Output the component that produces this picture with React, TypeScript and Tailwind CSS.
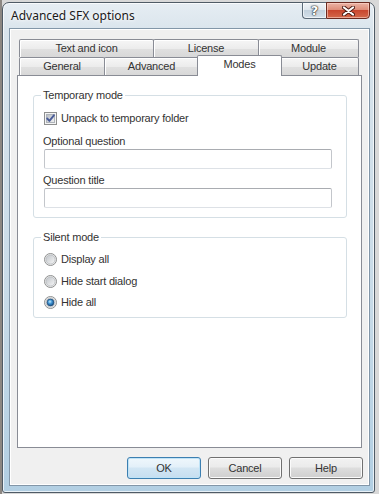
import React from "react";

const tabCls =
  "h-[18px] flex items-center justify-center border border-b-0 border-[#898c95] rounded-t-[2px] bg-[linear-gradient(#f6f6f6,#ececec_50%,#e0e0e0_52%,#d8d8d8)] shadow-[inset_1px_1px_0_#ffffff]";

function Checkbox() {
  return (
    <svg width="13" height="13" viewBox="0 0 13 13" className="shrink-0">
      <defs>
        <linearGradient id="cbg" x1="0" y1="0" x2="1" y2="1">
          <stop offset="0" stopColor="#b5bac1" />
          <stop offset="1" stopColor="#f4f4f4" />
        </linearGradient>
      </defs>
      <rect x="0.5" y="0.5" width="12" height="12" fill="#f4f4f4" stroke="#8e8f8f" />
      <rect x="2.5" y="2.5" width="8" height="8" fill="url(#cbg)" stroke="#aeb3b9" />
      <path
        d="M3.2 6.5 L5.4 8.9 L9.9 3.3"
        fill="none"
        stroke="#4a5c98"
        strokeWidth="1.9"
        strokeLinecap="round"
        strokeLinejoin="round"
      />
    </svg>
  );
}

function Radio({ checked, id }: { checked?: boolean; id: string }) {
  return (
    <svg width="13" height="13" viewBox="0 0 13 13" className="shrink-0">
      <defs>
        <linearGradient id={`rg${id}`} x1="0" y1="0" x2="1" y2="1">
          <stop offset="0" stopColor="#bfc3c8" />
          <stop offset="1" stopColor="#f8f8f8" />
        </linearGradient>
        <radialGradient id={`rd${id}`} cx="0.42" cy="0.38" r="0.65">
          <stop offset="0" stopColor="#c4ecff" />
          <stop offset="0.45" stopColor="#3f93d2" />
          <stop offset="1" stopColor="#154a7e" />
        </radialGradient>
      </defs>
      <circle cx="6.5" cy="6.5" r="6" fill="#f3f3f3" stroke="#8e8f8f" />
      <circle cx="6.5" cy="6.5" r="4.6" fill={`url(#rg${id})`} stroke="#b4b7bb" strokeWidth="0.8" />
      {checked && <circle cx="6.5" cy="6.5" r="3.4" fill={`url(#rd${id})`} stroke="#1b4a78" strokeWidth="0.7" />}
    </svg>
  );
}

function TextBox() {
  return (
    <div className="ml-[10px] w-[288px] h-[20px] bg-white rounded-[2px] border border-[#c3c6cb] border-t-[#a9acb1] border-b-[#dde1e6]" />
  );
}

function Button({ children, def }: { children: React.ReactNode; def?: boolean }) {
  return (
    <div
      className={
        def
          ? "w-[74px] h-[22px] flex items-center justify-center rounded-[3px] border border-[#3c7fb1] bg-[linear-gradient(#eff7fc,#e3f0f9_45%,#d2e6f4_50%,#c6def0)] shadow-[inset_0_0_0_1px_#bfe3f7]"
          : "w-[74px] h-[22px] flex items-center justify-center rounded-[3px] border border-[#707070] bg-[linear-gradient(#f2f2f2,#ebebeb_45%,#dddddd_50%,#cfcfcf)] shadow-[inset_0_0_0_1px_#fbfbfb]"
      }
    >
      {children}
    </div>
  );
}

export default function App() {
  return (
    <div className="w-[379px] h-[494px] overflow-hidden bg-[linear-gradient(90deg,#8c8782_0px,#8c8782_2px,#d8d8d8_2px)] pt-[2px] pl-[2px] font-['Liberation_Sans',Arial,sans-serif] text-[11px] tracking-[-0.2px] text-[#333333]">
      <div className="w-[373px] h-[491px] flex flex-col border border-[#4f5b66] rounded-t-[7px] rounded-b-[3px] bg-[linear-gradient(180deg,#e6edf3,#d9e4ec_6%,#c8dbe8_60%,#b2cfe3)] shadow-[inset_0_0_0_1px_rgba(255,255,255,0.7)]">
        {/* Title bar */}
        <div className="h-[25px] shrink-0 flex items-start pl-[8px] pr-[4px]">
          <div className="pt-[5px] text-[12px] leading-[16px] tracking-normal font-['Noto_Sans',sans-serif] text-[#1a1a1a] [text-shadow:0_0_6px_#fff,0_0_3px_#fff]">
            Advanced SFX options
          </div>
          <div className="ml-auto flex -mt-px h-[17px]">
            <div className="w-[24px] h-full flex items-center justify-center border border-r-0 border-[#5b6a78] rounded-bl-[4px] bg-[linear-gradient(#f1f4f7,#dfe7ee_45%,#c3d1dd_50%,#d4e0ea)] shadow-[inset_0_0_0_1px_rgba(255,255,255,0.6)]">
              <span className="text-[13px] leading-[13px] font-bold tracking-normal font-['DejaVu_Sans',sans-serif] text-white [text-shadow:0_0_1px_#222,0_0_1px_#222,0_0_2px_#333]">
                ?
              </span>
            </div>
            <div className="w-[44px] h-full flex items-center justify-center border border-[#6b2a20] rounded-br-[4px] bg-[linear-gradient(#ebb3a5,#de8d79_45%,#c9462e_50%,#d4694b)] shadow-[inset_0_0_0_1px_rgba(255,220,210,0.55)]">
              <svg width="13" height="10" viewBox="0 0 13 10">
                <path d="M2 1.5 L11 8.5 M11 1.5 L2 8.5" stroke="#4a1a12" strokeWidth="4" strokeLinecap="round" />
                <path d="M2 1.5 L11 8.5 M11 1.5 L2 8.5" stroke="#ffffff" strokeWidth="2.2" strokeLinecap="round" />
              </svg>
            </div>
          </div>
        </div>

        {/* Client area */}
        <div className="ml-[6px] mr-[4px] h-[458px] shrink-0 flex flex-col border border-[#8296a8] bg-[#f0f0f0] shadow-[inset_0_0_0_1px_#ffffff] pt-[10px] pb-[6px] px-[7px]">
          {/* Tab rows */}
          <div className="flex h-[18px] pl-[2px]">
            <div className={`${tabCls} w-[135px]`}>Text and icon</div>
            <div className={`${tabCls} w-[106px] -ml-px`}>License</div>
            <div className={`${tabCls} w-[101px] -ml-px`}>Module</div>
          </div>
          <div className="flex h-[18px] pl-[2px] items-end">
            <div className={`${tabCls} w-[86px]`}>General</div>
            <div className={`${tabCls} w-[95px] -ml-px`}>Advanced</div>
            <div className="relative z-10 w-[85px] h-[21px] -ml-[2px] -mb-px flex items-center justify-center pb-[3px] bg-white border border-b-0 border-[#898c95] rounded-t-[2px]">
              Modes
            </div>
            <div className={`${tabCls} w-[79px] -ml-[2px]`}>Update</div>
          </div>

          {/* Panel */}
          <div className="h-[373px] shrink-0 flex flex-col border border-[#898c95] bg-white pl-[15px]">
            {/* Temporary mode */}
            <div className="mt-[19px] w-[314px] flex flex-col border border-[#d5dfe5] rounded-[3px] pb-[9px]">
              <div className="-mt-[7px] ml-[7px] px-[2px] w-fit h-[13px] leading-[13px] bg-white">Temporary mode</div>
              <div className="mt-[10px] ml-[10px] h-[13px] flex items-center gap-[4px] leading-[13px]">
                <Checkbox />
                <span>Unpack to temporary folder</span>
              </div>
              <div className="mt-[10px] ml-[9px] h-[13px] leading-[13px]">Optional question</div>
              <div className="mt-[1px]">
                <TextBox />
              </div>
              <div className="mt-[5px] ml-[9px] h-[13px] leading-[13px]">Question title</div>
              <div className="mt-[1px]">
                <TextBox />
              </div>
            </div>

            {/* Silent mode */}
            <div className="mt-[19px] w-[314px] flex flex-col border border-[#d5dfe5] rounded-[3px] pb-[8px]">
              <div className="-mt-[7px] ml-[7px] px-[2px] w-fit h-[13px] leading-[13px] bg-white">Silent mode</div>
              <div className="mt-[9px] ml-[10px] h-[13px] flex items-center gap-[4px] leading-[13px]">
                <Radio id="a" />
                <span>Display all</span>
              </div>
              <div className="mt-[9px] ml-[10px] h-[13px] flex items-center gap-[4px] leading-[13px]">
                <Radio id="b" />
                <span>Hide start dialog</span>
              </div>
              <div className="mt-[8px] ml-[10px] h-[13px] flex items-center gap-[4px] leading-[13px]">
                <Radio id="c" checked />
                <span>Hide all</span>
              </div>
            </div>
          </div>

          {/* Buttons */}
          <div className="mt-[9px] flex justify-end gap-[7px] -mr-px">
            <Button def>OK</Button>
            <Button>Cancel</Button>
            <Button>Help</Button>
          </div>
        </div>
      </div>
    </div>
  );
}
